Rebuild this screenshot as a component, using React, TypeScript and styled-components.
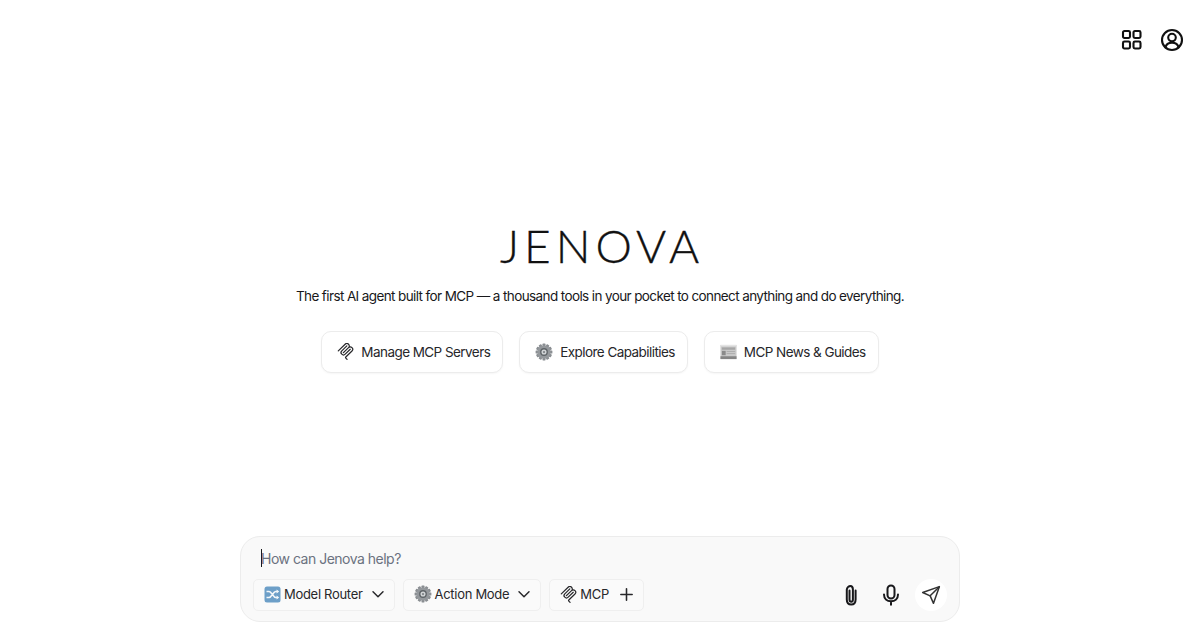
import React from "react";
import styled, { createGlobalStyle } from "styled-components";

const Global = createGlobalStyle`
  html, body { margin: 0; height: 100%; background: #fff; }
  #root { height: 100%; }
  * { box-sizing: border-box; }
`;

const Page = styled.div`
  height: 630px;
  display: flex;
  flex-direction: column;
  font-family: Inter, "Liberation Sans", sans-serif;
  color: #18181b;
  overflow: hidden;
`;

const TopBar = styled.header`
  height: 80px;
  padding: 24px 16px 0 0;
  display: flex;
  justify-content: flex-end;
  gap: 16px;
`;

const TopIcon = styled.button`
  width: 24px;
  height: 32px;
  padding: 0;
  border: 0;
  background: none;
  color: #111;
  display: flex;
  align-items: center;
  justify-content: center;
`;

const Hero = styled.main`
  flex: 1;
  padding-top: 138px;
  display: flex;
  flex-direction: column;
  align-items: center;
`;

const Logo = styled.h1`
  margin: 0;
  height: 56px;
  font-family: Lato, sans-serif;
  font-weight: 300;
  font-size: 46px;
  line-height: 56px;
  letter-spacing: 5px;
  -webkit-text-stroke: 0.35px #111;
  color: #111;
  margin-right: -4px;
`;

const Tagline = styled.p`
  margin: 12px 0 0;
  font-size: 13.5px;
  line-height: 20px;
  letter-spacing: -0.61px;
  color: #18181b;
`;

const Actions = styled.div`
  margin-top: 25px;
  display: flex;
  gap: 16px;
`;

const ActionButton = styled.button`
  height: 42px;
  padding: 0 12px 1px 15px;
  display: flex;
  align-items: center;
  gap: 7px;
  background: #fff;
  border: 1px solid #ececec;
  border-radius: 10px;
  box-shadow: 0 1px 2px rgba(0, 0, 0, 0.04);
  font: inherit;
  font-size: 13.5px;
  letter-spacing: -0.56px;
  color: #27272a;
`;

const Composer = styled.section`
  width: 720px;
  height: 86px;
  margin: 0 auto 8px;
  padding: 11px 12px 10px 12px;
  background: #f9f9f9;
  border: 1px solid #ececec;
  border-radius: 20px;
  display: flex;
  flex-direction: column;
  justify-content: space-between;
`;

const Prompt = styled.div`
  height: 20px;
  margin-left: 8px;
  display: flex;
  align-items: center;
  font-size: 14px;
  letter-spacing: -0.5px;
  color: #6b7280;
`;

const Caret = styled.span`
  width: 1px;
  height: 18px;
  margin-right: -1px;
  background: #18181b;
`;

const ToolRow = styled.div`
  display: flex;
  align-items: center;
  gap: 8px;
`;

const ToolButton = styled.button`
  height: 32px;
  padding: 0 8px 2px 10px;
  display: flex;
  align-items: center;
  gap: 3px;
  background: #fafafa;
  border: 1px solid #efefef;
  border-radius: 5px;
  font: inherit;
  font-size: 13px;
  letter-spacing: -0.3px;
  color: #27272a;
`;

const Trailing = styled.span<{ $gap?: number }>`
  margin-left: ${(p) => p.$gap ?? 4}px;
  display: flex;
  color: #27272a;
`;

const RightTools = styled.div`
  margin-left: auto;
  display: flex;
  align-items: center;
  gap: 8px;
`;

const RoundIcon = styled.button<{ $filled?: boolean }>`
  width: 32px;
  height: 32px;
  padding: 0;
  border: 0;
  border-radius: 50%;
  background: ${(p) => (p.$filled ? "#fff" : "transparent")};
  color: #18181b;
  display: flex;
  align-items: center;
  justify-content: center;
`;

const McpIcon = ({ size = 16 }: { size?: number }) => (
  <svg width={size} height={size} viewBox="0 0 24 24" fill="#27272a">
    <path d="M15.688 2.343a2.588 2.588 0 00-3.61 0l-9.626 9.44a.863.863 0 01-1.203 0 .823.823 0 010-1.18l9.626-9.44a4.313 4.313 0 016.016 0 4.116 4.116 0 011.204 3.54 4.3 4.3 0 013.609 1.18l.05.05a4.115 4.115 0 010 5.9l-8.706 8.537a.274.274 0 000 .393l1.788 1.754a.823.823 0 010 1.18.863.863 0 01-1.203 0l-1.788-1.753a1.92 1.92 0 010-2.754l8.706-8.538a2.47 2.47 0 000-3.54l-.05-.049a2.588 2.588 0 00-3.607-.003l-7.172 7.034-.002.002-.098.097a.863.863 0 01-1.204 0 .823.823 0 010-1.18l7.273-7.133a2.47 2.47 0 00-.003-3.537z" />
    <path d="M14.485 4.703a.823.823 0 000-1.18.863.863 0 00-1.204 0l-7.119 6.982a4.115 4.115 0 000 5.9 4.314 4.314 0 006.016 0l7.12-6.982a.823.823 0 000-1.18.863.863 0 00-1.204 0l-7.119 6.982a2.588 2.588 0 01-3.61 0 2.47 2.47 0 010-3.54l7.12-6.982z" />
  </svg>
);

const GearIcon = ({ size = 18 }: { size?: number }) => {
  const teeth = Array.from({ length: 12 }, (_, i) => i * 30);
  return (
    <svg width={size} height={size} viewBox="0 0 24 24">
      {teeth.map((a) => (
        <rect key={a} x="10" y="0.8" width="4" height="5" rx="0.8" fill="#8a8e92" transform={`rotate(${a} 12 12)`} />
      ))}
      <circle cx="12" cy="12" r="8.8" fill="#94989c" />
      <circle cx="12" cy="12" r="5.2" fill="#5f6468" />
      <circle cx="12" cy="12" r="3.4" fill="#d2d5d7" />
      <circle cx="12" cy="12" r="1.5" fill="#7f8387" />
    </svg>
  );
};

const NewsIcon = () => (
  <svg width="17" height="18" viewBox="0 0 18 18">
    <rect x="0.5" y="1.500" width="17" height="15" fill="#c9c9c9" />
    <rect x="0.5" y="1.500" width="17" height="1.600" fill="#e4e4e4" />
    <rect x="2" y="4.200" width="14" height="2.400" fill="#a5a5a5" />
    <rect x="2" y="7.800" width="4" height="4.600" fill="#8a8a8a" />
    <rect x="7" y="8" width="9" height="1" fill="#adadad" />
    <rect x="7" y="10.200" width="9" height="1" fill="#adadad" />
    <rect x="0.5" y="13.500" width="17" height="3" fill="#858585" />
  </svg>
);

const ShuffleEmoji = () => (
  <svg width="17" height="17" viewBox="0 0 17 17">
    <rect x="0.5" y="0.5" width="16" height="16" rx="2.500" fill="#6d9fc8" />
    <path
      d="M2.500 5.500h2.600c2.400 0 4.200 6 6.600 6h1.800M2.500 11.500h2.600c2.400 0 4.200-6 6.600-6h1.800"
      fill="none"
      stroke="#f3f7fa"
      strokeWidth="1.600"
    />
    <path d="M12.600 3.400l2.600 2.100-2.600 2.100zM12.600 9.400l2.600 2.100-2.600 2.100z" fill="#f3f7fa" />
  </svg>
);

const Chevron = () => (
  <svg width="16" height="16" viewBox="0 0 24 24" fill="none" stroke="currentColor" strokeWidth="2.200" strokeLinecap="round" strokeLinejoin="round">
    <path d="M4.500 8.500l7.500 7.500 7.500-7.500" />
  </svg>
);

const Plus = () => (
  <svg width="17" height="17" viewBox="0 0 24 24" fill="none" stroke="currentColor" strokeWidth="2.200" strokeLinecap="round">
    <path d="M12 4v16M4 12h16" />
  </svg>
);

const GridIcon = () => (
  <svg width="24" height="24" viewBox="0 0 24 24" fill="none" stroke="currentColor" strokeWidth="2.100" strokeLinejoin="round">
    <rect x="3" y="3" width="7" height="7" rx="1.400" />
    <rect x="13.500" y="3" width="7" height="7" rx="1.400" />
    <rect x="3" y="13.500" width="7" height="7" rx="1.400" />
    <rect x="13.500" y="13.500" width="7" height="7" rx="1.400" />
  </svg>
);

const UserIcon = () => (
  <svg width="24" height="24" viewBox="0 0 24 24" fill="none" stroke="currentColor" strokeWidth="2.100" strokeLinecap="round">
    <circle cx="12" cy="12" r="10" />
    <circle cx="12" cy="9.600" r="3.800" />
    <path d="M5.400 19.400c.7-3 3-4.600 6.600-4.600s5.900 1.600 6.600 4.600" />
  </svg>
);

const ClipIcon = () => (
  <svg width="24" height="24" viewBox="0 0 24 24" fill="none" stroke="currentColor" strokeWidth="2" strokeLinecap="round">
    <path d="M10.500 7.500v9c0 1.400.7 2.200 1.700 2.200s1.700-.8 1.700-2.200V6.500c0-2.200-1-3.500-2.500-3.500S8 4.300 7.800 6.500v10c0 3 1.700 5 4.400 5s4.400-2 4.400-5V7.500" />
  </svg>
);

const MicIcon = () => (
  <svg width="24" height="24" viewBox="0 0 24 24" fill="none" stroke="currentColor" strokeWidth="2" strokeLinecap="round">
    <rect x="8.500" y="2.500" width="7" height="13" rx="3.500" />
    <path d="M5 11.500c0 4.200 3 6.800 7 6.800s7-2.600 7-6.800M12 18.300v3.400" />
  </svg>
);

const SendIcon = () => (
  <svg width="20" height="20" viewBox="0 0 24 24" fill="none" stroke="#333" strokeWidth="1.800" strokeLinecap="round" strokeLinejoin="round">
    <path d="M22 2L15 22l-4-9-9-4z" />
    <path d="M22 2L11 13" />
  </svg>
);

export default function App() {
  return (
    <Page>
      <Global />
      <TopBar>
        <TopIcon aria-label="Apps"><GridIcon /></TopIcon>
        <TopIcon aria-label="Account"><UserIcon /></TopIcon>
      </TopBar>
      <Hero>
        <Logo>JENOVA</Logo>
        <Tagline>The first AI agent built for MCP — a thousand tools in your pocket to connect anything and do everything.</Tagline>
        <Actions>
          <ActionButton><McpIcon size={17} />Manage MCP Servers</ActionButton>
          <ActionButton><GearIcon />Explore Capabilities</ActionButton>
          <ActionButton><NewsIcon />MCP News &amp; Guides</ActionButton>
        </Actions>
      </Hero>
      <Composer>
        <Prompt><Caret />How can Jenova help?</Prompt>
        <ToolRow>
          <ToolButton><ShuffleEmoji />Model Router<Trailing><Chevron /></Trailing></ToolButton>
          <ToolButton><GearIcon size={18} />Action Mode<Trailing><Chevron /></Trailing></ToolButton>
          <ToolButton><McpIcon size={17} />MCP<Trailing $gap={6}><Plus /></Trailing></ToolButton>
          <RightTools>
            <RoundIcon aria-label="Attach"><ClipIcon /></RoundIcon>
            <RoundIcon aria-label="Voice"><MicIcon /></RoundIcon>
            <RoundIcon $filled aria-label="Send"><SendIcon /></RoundIcon>
          </RightTools>
        </ToolRow>
      </Composer>
    </Page>
  );
}
